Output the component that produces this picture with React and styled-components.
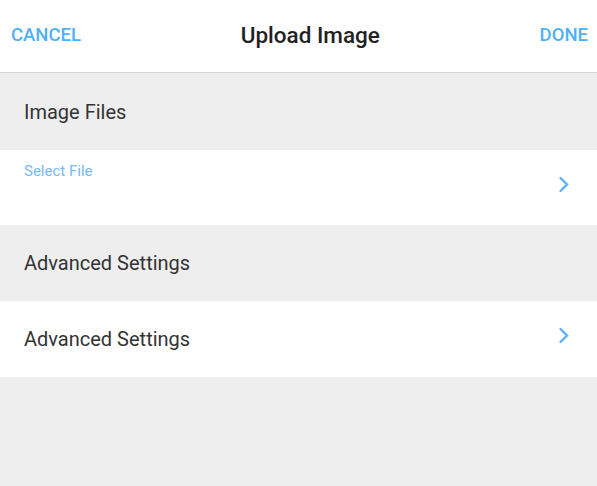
import React from "react";
import styled, { createGlobalStyle } from "styled-components";

const Global = createGlobalStyle`
  html, body { margin: 0; padding: 0; background: #eeeeee; }
  body { font-family: Roboto, "Noto Sans", sans-serif; }
  #root { min-height: 486px; background: #eeeeee; }
`;

const Page = styled.div`
  width: 597px;
  min-height: 486px;
  display: flex;
  flex-direction: column;
  background: #eeeeee;
`;

const Header = styled.header`
  height: 72px;
  background: #fff;
  border-bottom: 1px solid #d6d6d6;
  display: flex;
  align-items: center;
  padding: 0 9px 0 11px;
`;

const HeaderButton = styled.button`
  border: 0;
  background: none;
  padding: 0;
  font-family: Roboto, sans-serif;
  font-weight: 500;
  font-size: 18.5px;
  color: #4fb0f8;
  text-transform: uppercase;
  cursor: pointer;
  transform: translateY(-1px);
`;

const Title = styled.h1`
  flex: 1;
  margin: 0;
  text-align: center;
  font-size: 22.5px;
  font-weight: 500;
  color: #222;
  transform: translateY(-1px);
`;

const SectionHeader = styled.div`
  height: ${(p) => p.$h}px;
  display: flex;
  align-items: center;
  padding-left: 24px;
  font-size: 20px;
  color: #333;
  background: #eeeeee;
`;

const Row = styled.div`
  height: ${(p) => p.$h}px;
  background: #fff;
  display: flex;
  align-items: ${(p) => (p.$top ? "flex-start" : "center")};
  justify-content: space-between;
  padding: 0 24px;
  position: relative;
`;

const RowLabel = styled.span`
  font-size: 20px;
  color: #333;
`;

const Placeholder = styled.span`
  margin-top: 12px;
  font-size: 15px;
  color: #7ab9f3;
`;

const ChevronWrap = styled.span`
  position: absolute;
  right: 27px;
  top: ${(p) => p.$top}px;
  display: flex;
`;

const Chevron = ({ top }) => (
  <ChevronWrap $top={top}>
    <svg width="12" height="17" viewBox="0 0 12 17">
      <polyline points="2.5,2 9,8.5 2.5,15" fill="none" stroke="#5db2f7" strokeWidth="2.4" strokeLinecap="round" strokeLinejoin="miter" />
    </svg>
  </ChevronWrap>
);

export default function App() {
  return (
    <Page>
      <Global />
      <Header>
        <HeaderButton>Cancel</HeaderButton>
        <Title>Upload Image</Title>
        <HeaderButton>Done</HeaderButton>
      </Header>
      <SectionHeader $h={77}>Image Files</SectionHeader>
      <Row $h={75} $top>
        <Placeholder>Select File</Placeholder>
        <Chevron top={26} />
      </Row>
      <SectionHeader $h={76}>Advanced Settings</SectionHeader>
      <Row $h={76}>
        <RowLabel>Advanced Settings</RowLabel>
        <Chevron top={26} />
      </Row>
    </Page>
  );
}
